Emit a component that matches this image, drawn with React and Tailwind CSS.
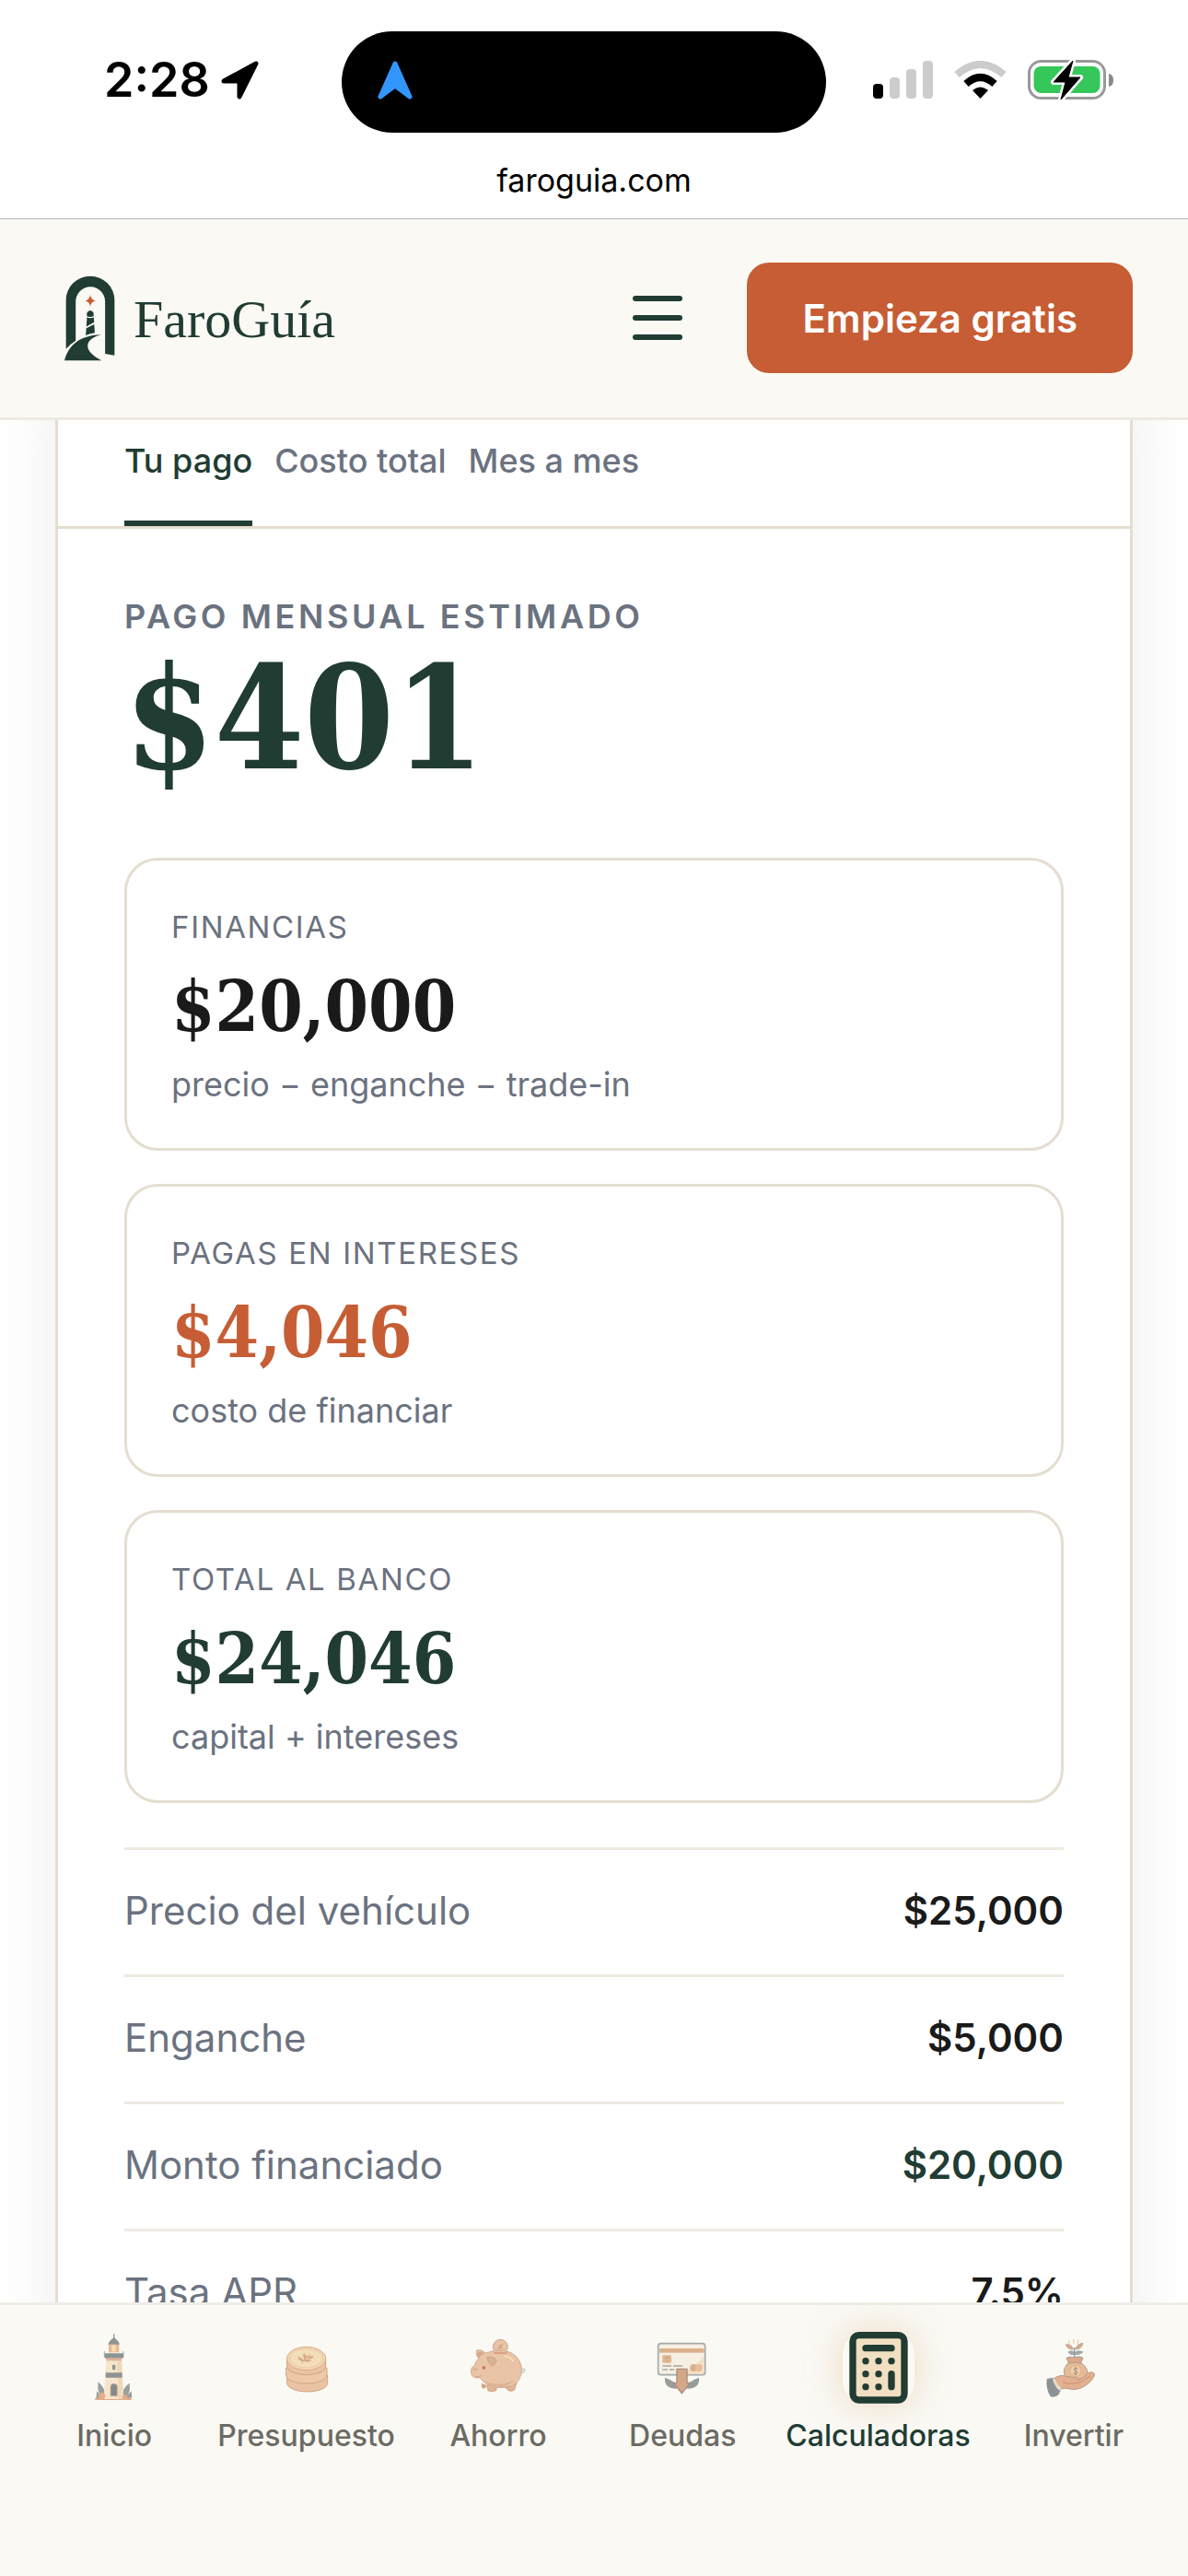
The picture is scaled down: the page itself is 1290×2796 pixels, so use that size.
import React, { useState } from 'react';
import clsx from 'clsx';

const tabs = [
  { id: 'pago', label: 'Tu pago' },
  { id: 'costo', label: 'Costo total' },
  { id: 'meses', label: 'Mes a mes' }
];

const stats = [
  { label: 'Financias', value: '$20,000', note: 'precio − enganche − trade-in', color: 'text-[#1a1a1a]' },
  { label: 'Pagas en intereses', value: '$4,046', note: 'costo de financiar', color: 'text-[#c65d34]' },
  { label: 'Total al banco', value: '$24,046', note: 'capital + intereses', color: 'text-[#203c33]' }
];

const rows = [
  { label: 'Precio del vehículo', value: '$25,000' },
  { label: 'Enganche', value: '$5,000' },
  { label: 'Monto financiado', value: '$20,000', highlight: true },
  { label: 'Tasa APR', value: '7.5%' }
];

const App = () => {
  const [activeTab, setActiveTab] = useState('pago');

  return (
    <div className="flex h-screen flex-col overflow-hidden bg-white font-['Inter',sans-serif]">
      <StatusBar />
      <Header />

      <main className="min-h-0 flex-1 overflow-hidden px-[60px]">
        <section className="-mt-[72px] rounded-t-[48px] border-[3px] border-[#e5ddd0] bg-white shadow-[0_12px_72px_rgba(0,0,0,0.08)]">
          <div role="tablist" className="flex gap-6 border-b-[3px] border-[#e5ddd0] px-[72px] pt-12">
            {tabs.map((tab) => (
              <button
                key={tab.id}
                type="button"
                role="tab"
                aria-selected={activeTab === tab.id}
                onClick={() => setActiveTab(tab.id)}
                className={clsx(
                  'border-b-[6px] py-[38px] text-[36px] leading-[54px] font-medium',
                  activeTab === tab.id
                    ? 'border-[#203c33] text-[#203c33]'
                    : 'border-transparent text-[#6b7280]'
                )}
              >
                {tab.label}
              </button>
            ))}
          </div>

          <div className="px-[72px] pt-[72px]">
            <p className="text-[36px] leading-[46px] font-semibold tracking-widest text-[#6b7280] uppercase">
              Pago mensual estimado
            </p>
            <p className="mb-[63px] font-['DejaVu_Serif_Condensed','DejaVu_Serif',serif] text-[156px] leading-[176px] font-bold text-[#203c33]">
              $401
            </p>

            <div className="flex flex-col gap-9">
              {stats.map((stat) => (
                <StatCard key={stat.label} {...stat} />
              ))}
            </div>

            <dl className="mt-12">
              {rows.map((row) => (
                <div
                  key={row.label}
                  className="flex h-[138px] items-center justify-between border-t-[3px] border-[#efeae0] pb-1 text-[42px]"
                >
                  <dt className="text-[#6b7280]">{row.label}</dt>
                  <dd className={clsx('font-semibold', row.highlight ? 'text-[#203c33]' : 'text-[#1a1a1a]')}>
                    {row.value}
                  </dd>
                </div>
              ))}
            </dl>
          </div>
        </section>
      </main>

      <BottomNav />
    </div>
  );
};

const StatusBar = () => (
  <div className="border-b border-[#b8b8b8] bg-white pt-[34px] text-black">
    <div className="flex items-center">
      <div className="flex flex-1 items-center gap-3 pb-1 pl-[113px]">
        <span className="text-[52px] leading-[60px] font-semibold">2:28</span>
        <svg viewBox="0 0 42 42" className="h-[42px] w-[42px]">
          <path d="M38 3 L20 39 V22 H3 Z" fill="#000" stroke="#000" strokeWidth="5" strokeLinejoin="round" />
        </svg>
      </div>
      <div className="flex h-[110px] w-[526px] items-center rounded-full bg-black pl-[39px]">
        <svg viewBox="0 0 38 42" className="mb-1 h-[42px] w-[38px]">
          <path d="M19 3 L35 39 L19 27 L3 39 Z" fill="#3396ff" stroke="#3396ff" strokeWidth="5" strokeLinejoin="round" />
        </svg>
      </div>
      <div className="mr-[81px] ml-[51px] flex items-center gap-[23px] pb-1">
        <svg viewBox="0 0 65 42" className="h-[42px] w-[65px]">
          <rect x="0" y="25" width="11" height="16" rx="4" fill="#000" />
          <rect x="18" y="18" width="11" height="23" rx="4" fill="#ccc" />
          <rect x="36" y="9" width="11" height="32" rx="4" fill="#ccc" />
          <rect x="54" y="0" width="11" height="41" rx="4" fill="#ccc" />
        </svg>
        <svg viewBox="0 0 57 42" className="h-[42px] w-[57px]" fill="none">
          <path d="M3 15 Q28.5 -7 54 15" stroke="#ccc" strokeWidth="8" />
          <path d="M13 25 Q28.5 11 44 25" stroke="#000" strokeWidth="8" />
          <path d="M20 32 Q28.5 25 37 32 L28.5 41 Z" fill="#000" />
        </svg>
        <svg viewBox="0 0 93 46" className="h-[46px] w-[93px]">
          <rect x="1.5" y="2.5" width="82" height="40" rx="13" fill="none" stroke="#999" strokeWidth="3" />
          <rect x="6.5" y="8" width="72" height="29" rx="8" fill="#35c759" />
          <path d="M88 16 Q93 17 93 23 Q93 29 88 30 Z" fill="#888" />
          <path d="M49 2 L28 25 H41 L36 44 L57 20 H44 Z" fill="#000" stroke="#fff" strokeWidth="6" strokeLinejoin="round" />
          <path d="M49 2 L28 25 H41 L36 44 L57 20 H44 Z" fill="#000" stroke="#000" strokeWidth="1" strokeLinejoin="round" />
        </svg>
      </div>
    </div>
    <p className="pt-[31px] pb-5 text-center text-[34px] leading-[42px]">faroguia.com</p>
  </div>
);

const Header = () => (
  <header className="z-10 flex items-center border-b-[3px] border-[#efeae2] bg-[#faf9f4] pt-[47px] pr-[60px] pb-12 pl-[70px]">
    <a href="#inicio" className="flex items-center gap-5">
      <svg viewBox="59 57 167 280" className="h-[93px] w-[55px]" aria-hidden="true">
        <path
          fill="#203c33"
          d="M64 298 V137 A80 79 0 0 1 224 137 V319 L193 314 V142 A48.500 49 0 0 0 96 142 V271 Q78 283 64 298 Z"
        />
        <path fill="#c65d34" d="M144 119 Q146 137 162 139 Q146 141 144 159 Q142 141 127 139 Q142 137 144 119 Z" />
        <path fill="#203c33" d="M133 181 Q134 173 144 171 Q154 173 155 181 V190 Q144 195 133 190 Z" />
        <path fill="#203c33" d="M132 194 Q144 199 156 194 V200 L157 210 L131 224 L133 200 Z" />
        <path fill="#203c33" d="M131 230 L157 217 L159 245 Q144 247 129 253 Z" />
        <path fill="#203c33" d="M59 336 C72 285 112 252 181 251 C130 262 112 300 181 336 Z" />
      </svg>
      <span className="pt-1 font-['Liberation_Serif',serif] text-[58px] leading-[64px] text-[#203c33]">FaroGuía</span>
    </a>
    <div className="ml-auto flex items-center gap-[34px]">
      <button type="button" aria-label="Menú" className="flex flex-col gap-[15px] p-9">
        <span className="h-[6px] w-[54px] rounded-full bg-[#203c33]" />
        <span className="h-[6px] w-[54px] rounded-full bg-[#203c33]" />
        <span className="h-[6px] w-[54px] rounded-full bg-[#203c33]" />
      </button>
      <button
        type="button"
        className="h-[120px] rounded-[24px] bg-[#c65d34] px-[60px] text-[42px] font-semibold whitespace-nowrap text-white"
      >
        Empieza gratis
      </button>
    </div>
  </header>
);

const StatCard = ({ label, value, note, color }) => (
  <div className="rounded-[36px] border-[3px] border-[#e5ddd0] px-12 py-12">
    <p className="text-[33px] leading-[48px] tracking-wider text-[#6b7280] uppercase">{label}</p>
    <p
      className={clsx(
        "font-['DejaVu_Serif_Condensed','DejaVu_Serif',serif] text-[76px] leading-[126px] font-bold",
        color
      )}
    >
      {value}
    </p>
    <p className="text-[36px] leading-[42px] text-[#6b7280]">{note}</p>
  </div>
);

const LighthouseIcon = () => (
  <svg viewBox="79 123 234 234" className="h-[78px] w-[78px]">
    <path d="M132 345 Q140 328 152 324 L165 318 H226 Q242 326 254 345 Z" fill="#dfab88" />
    <path d="M144 286 Q158 298 164 312 V340 Q138 328 144 286 Z M246 290 Q230 300 226 314 V338 Q252 328 246 290 Z" fill="#9aa0a0" />
    <path d="M139 316 L158 336 L138 338 Z M252 316 L232 336 L254 338 Z" fill="#9aa0a0" />
    <path d="M170 212 H220 L226 342 H162 Z" fill="#f5e6cd" />
    <path d="M205 212 H220 L226 342 H208 Z" fill="#f0d9b8" />
    <rect x="178" y="164" width="34" height="26" fill="#e8bb94" />
    <rect x="188" y="166" width="13" height="22" fill="#f7dcae" />
    <path d="M176 164 Q180 150 195 142 Q210 150 214 164 Z" fill="#8e9393" />
    <path d="M195 130 V146" stroke="#8e9393" strokeWidth="4" />
    <path d="M164 186 V206 M226 186 V206" stroke="#a7abab" strokeWidth="3" />
    <rect x="165" y="193" width="61" height="16" rx="3" fill="#8e9393" />
    <rect x="170" y="209" width="50" height="8" fill="#e3b391" />
    <rect x="190" y="230" width="10" height="17" rx="3" fill="#8e9393" />
    <rect x="168" y="256" width="54" height="16" rx="2" fill="#8e9393" />
    <path d="M184 332 V302 Q184 292 195 292 Q206 292 206 302 V332 Z" fill="#858b8c" stroke="#d8b08f" strokeWidth="2" />
    <circle cx="156" cy="332" r="11" fill="#e5af89" />
    <circle cx="230" cy="336" r="8" fill="#e5af89" />
  </svg>
);

const CoinsIcon = () => (
  <svg viewBox="703 123 234 234" className="h-[78px] w-[78px]" strokeWidth="3">
    <path d="M756 272 V290 A64 27 0 0 0 888 290 V264 Z" fill="#e9c3a3" stroke="#d3a582" />
    <path d="M753 240 V264 A66 27 0 0 0 886 264 V240 Z" fill="#edc9a8" stroke="#d3a582" />
    <path d="M756 212 V236 A63 27 0 0 0 882 236 V212 Z" fill="#e9c3a3" stroke="#d3a582" />
    <ellipse cx="819" cy="210" rx="63" ry="38" fill="#f0d5b3" stroke="#dcae88" />
    <ellipse cx="819" cy="209" rx="53" ry="30" fill="#f3deb9" stroke="#e9c9a2" strokeWidth="2" />
    <path
      d="M804 226 Q806 212 832 196 M806 218 Q794 216 792 206 Q804 206 808 216 M814 210 Q806 202 812 194 Q820 200 818 208 M812 218 Q826 222 834 216 Q824 210 812 216 M822 208 Q836 212 842 204 Q832 200 824 206"
      fill="#dbae89"
      stroke="#d3a280"
      strokeWidth="2"
    />
  </svg>
);

const PiggyIcon = () => (
  <svg viewBox="126 123 234 234" className="h-[78px] w-[78px]" strokeWidth="3">
    <path d="M316 254 Q328 258 330 248 Q328 240 322 246" fill="none" stroke="#a8a9a6" />
    <path d="M188 290 L190 306 Q200 312 206 298 Z M262 296 L268 308 H280 Z" fill="#d9a283" />
    <path d="M206 296 L210 314 Q220 320 236 314 L238 300 Z M268 300 L276 314 Q288 318 296 312 L304 284 Z" fill="#e3b596" stroke="#d0a284" />
    <circle cx="250" cy="172" r="24" fill="#e9c2a3" stroke="#c5aa98" />
    <path d="M244 182 Q240 168 256 162 Q260 176 244 182 Z" fill="#d0aa8d" />
    <path
      d="M176 206 Q168 190 174 182 Q190 180 202 192 Q230 180 262 184 Q314 194 320 244 Q318 284 290 298 Q240 314 206 294 Q190 284 184 272 Q162 276 156 262 Q150 238 166 234 Q168 220 180 208 Z"
      fill="#eac4a6"
      stroke="#cfae98"
    />
    <path d="M176 206 Q172 192 178 188 Q190 186 198 194 Q184 200 180 208 Z" fill="#d7a88a" />
    <path d="M206 206 Q224 200 238 216 Q234 232 222 234 Q210 226 206 206 Z" fill="#d9b294" stroke="#cfa68a" />
    <path d="M228 192 H272" stroke="#d58f6c" strokeWidth="4" />
    <path d="M264 202 Q284 206 290 218" fill="none" stroke="#f5dcb9" strokeWidth="6" strokeLinecap="round" />
    <path d="M200 282 Q240 306 296 280 Q270 310 218 302 Z" fill="#dcb394" />
    <circle cx="196" cy="240" r="5" fill="#c8694d" />
    <path d="M160 246 Q172 240 176 250 M170 268 Q184 274 190 262" fill="none" stroke="#d2a081" />
  </svg>
);

const CardIcon = () => (
  <svg viewBox="731 123 234 234" className="h-[78px] w-[78px]">
    <path d="M791 272 Q788 308 830 308 Q830 284 791 272 Z M902 272 Q906 308 862 308 Q864 284 902 272 Z" fill="#989d9b" />
    <rect x="769" y="161" width="153" height="102" rx="9" fill="#f6efe3" stroke="#a3a9ac" strokeWidth="5" />
    <path d="M919 202 V250 Q919 260 908 260 H850 Q890 236 919 202 Z" fill="#f3e0c3" />
    <rect x="773" y="177" width="146" height="14" fill="#dbb08b" />
    <rect x="783" y="199" width="29" height="25" rx="4" fill="#dfb590" />
    <path d="M790 206 H806 M798 206 V218" stroke="#c79c7b" strokeWidth="2" />
    <path d="M783 234 H812 M818 234 H848 M783 246 H800 M806 246 H822" stroke="#aaa49d" strokeWidth="5" />
    <circle cx="885" cy="240" r="12" fill="#dcae8a" />
    <circle cx="901" cy="240" r="12" fill="#e6bd98" />
    <path d="M830 244 H863 V289 H873 L846 323 L819 289 H830 Z" fill="#d5a788" stroke="#a48d7e" strokeWidth="4" />
  </svg>
);

const CalculatorIcon = () => (
  <svg viewBox="255 123 234 234" className="h-[78px] w-[78px] overflow-visible">
    <rect x="288" y="134" width="168" height="211" rx="20" fill="#f1dfc1" stroke="#203c33" strokeWidth="22" />
    <path d="M330 176 H414 M414 260 V302" stroke="#203c33" strokeWidth="22" strokeLinecap="round" />
    <g fill="#203c33">
      <circle cx="330" cy="218" r="11" />
      <circle cx="372" cy="218" r="11" />
      <circle cx="414" cy="218" r="11" />
      <circle cx="330" cy="260" r="11" />
      <circle cx="372" cy="260" r="11" />
      <circle cx="330" cy="302" r="11" />
      <circle cx="372" cy="302" r="11" />
    </g>
  </svg>
);

const InvestIcon = () => (
  <svg viewBox="891 123 234 234" className="h-[78px] w-[78px]">
    <path d="M992 152 V160 M1007 148 V160 M1023 150 L1020 160" stroke="#f0cfa0" strokeWidth="4" strokeLinecap="round" />
    <path d="M982 164 Q1002 162 1006 180 Q988 182 982 164 Z M1038 160 Q1016 162 1014 180 Q1034 180 1038 160 Z" fill="#dbab89" stroke="#ab9a8d" strokeWidth="2" />
    <path d="M988 188 Q1002 178 1010 190 Q1022 178 1040 188 Q1028 200 1010 198 Q996 200 988 188 Z" fill="#a2a9a8" />
    <path d="M1010 174 V204" stroke="#8e9696" strokeWidth="4" />
    <path d="M984 208 Q996 202 1010 206 Q1026 200 1038 208 L1030 226 H992 Z" fill="#dda887" stroke="#9b9c9b" strokeWidth="3" />
    <path d="M988 226 Q1010 220 1034 226 Q1058 242 1050 270 Q1030 284 984 274 Q966 250 988 226 Z" fill="#e6bb98" stroke="#ae9a8d" strokeWidth="3" />
    <circle cx="1014" cy="250" r="18" fill="#f0cfa8" stroke="#d2a686" strokeWidth="2" />
    <path d="M1021 243 Q1014 237 1008 244 Q1010 250 1016 251 Q1022 256 1017 260 Q1010 262 1006 257 M1014 236 V265" fill="none" stroke="#a88c78" strokeWidth="3" />
    <path
      d="M940 278 Q960 260 984 268 L1010 272 Q1026 274 1020 280 Q1042 274 1052 258 Q1068 250 1076 260 Q1072 280 1046 298 Q1020 316 990 308 Q968 304 958 314 Z"
      fill="#e2b090"
      stroke="#b99a87"
      strokeWidth="3"
    />
    <path d="M972 288 Q1000 296 1030 286 L1062 268" fill="none" stroke="#cf8f6e" strokeWidth="3" />
    <path d="M920 276 L940 272 Q950 290 968 308 L958 328 Q948 338 932 334 Q916 308 920 276 Z" fill="#8c9394" />
    <path d="M938 274 L948 278 Q954 296 968 306 L962 316 Q944 300 938 274 Z" fill="#eadbc6" />
  </svg>
);

const navItems = [
  { id: 'inicio', label: 'Inicio', Icon: LighthouseIcon },
  { id: 'presupuesto', label: 'Presupuesto', Icon: CoinsIcon },
  { id: 'ahorro', label: 'Ahorro', Icon: PiggyIcon },
  { id: 'deudas', label: 'Deudas', Icon: CardIcon },
  { id: 'calculadoras', label: 'Calculadoras', Icon: CalculatorIcon, active: true },
  { id: 'invertir', label: 'Invertir', Icon: InvestIcon }
];

const BottomNav = () => (
  <nav className="z-10 flex border-t-[3px] border-[#efede6] bg-[#faf9f4] px-6 pt-[29px] pb-[130px]">
    {navItems.map(({ id, label, Icon, active }) => (
      <a
        key={id}
        href={`#${id}`}
        aria-current={active ? 'page' : undefined}
        className={clsx(
          'flex flex-1 flex-col items-center gap-3 px-3 text-[32px] leading-[45px] font-medium',
          active ? 'text-[#203c33]' : 'text-[#6b6b63]'
        )}
      >
        <span className={clsx('rounded-[24px]', active && 'shadow-[0_0_36px_rgba(226,184,140,0.5)]')}>
          <Icon />
        </span>
        {label}
      </a>
    ))}
  </nav>
);

export default App;
